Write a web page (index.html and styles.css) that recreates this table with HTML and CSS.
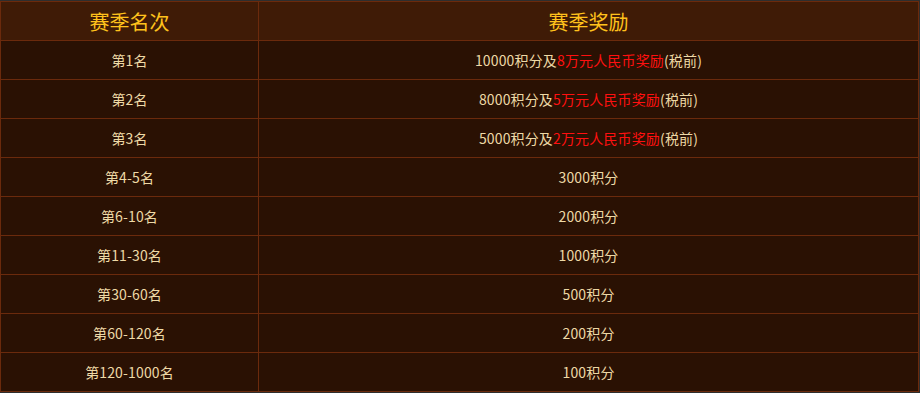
FILE: index.html
```html
<!DOCTYPE html>
<html lang="zh">
<head>
<meta charset="utf-8">
<link rel="stylesheet" href="styles.css">
</head>
<body>
<table class="rank">
  <thead>
    <tr><th class="c1">赛季名次</th><th class="c2">赛季奖励</th></tr>
  </thead>
  <tbody>
    <tr><td>第1名</td><td>10000积分及<span class="red">8万元人民币奖励</span>(税前)</td></tr>
    <tr><td>第2名</td><td>8000积分及<span class="red">5万元人民币奖励</span>(税前)</td></tr>
    <tr><td>第3名</td><td>5000积分及<span class="red">2万元人民币奖励</span>(税前)</td></tr>
    <tr><td>第4-5名</td><td>3000积分</td></tr>
    <tr><td>第6-10名</td><td>2000积分</td></tr>
    <tr><td>第11-30名</td><td>1000积分</td></tr>
    <tr><td>第30-60名</td><td>500积分</td></tr>
    <tr><td>第60-120名</td><td>200积分</td></tr>
    <tr><td>第120-1000名</td><td>100积分</td></tr>
  </tbody>
</table>
</body>
</html>
```
FILE: styles.css
```css
html, body {
  margin: 0;
  padding: 0;
}
body {
  background: #2e2e2e;
  padding-top: 1px;
  width: 920px;
  height: 393px;
  overflow: hidden;
  font-family: "Microsoft YaHei", "Noto Sans CJK SC", sans-serif;
}
.rank {
  width: 919px;
  border-collapse: collapse;
  table-layout: fixed;
  background: #2a1103;
}
.rank th, .rank td {
  border: 1px solid #6b2a0c;
  text-align: center;
  padding: 0;
}
.rank th {
  height: 38px;
  background: #3f1b06;
  color: #ffc21c;
  font-size: 20px;
  font-weight: normal;
}
.rank .c1 { width: 257px; }
.rank td {
  height: 38px;
  color: #eed9a6;
  font-size: 14px;
  letter-spacing: 0.15px;
}
.red { color: #ff1010; }
```
